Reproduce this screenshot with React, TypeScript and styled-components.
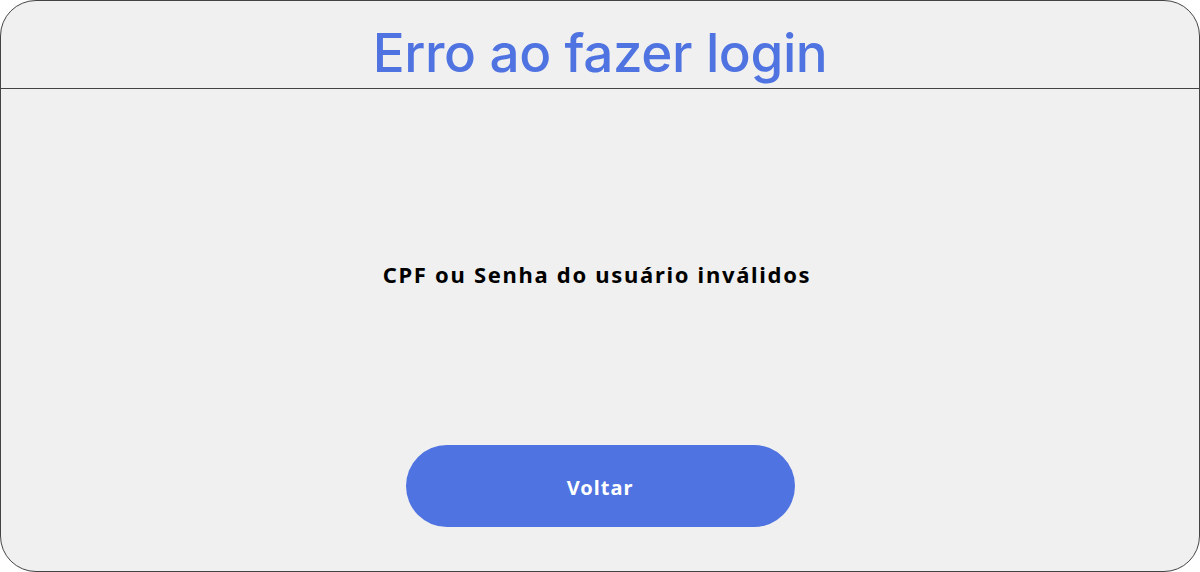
import * as React from 'react';
import styled, { createGlobalStyle } from 'styled-components';

const GlobalStyle = createGlobalStyle`
  html, body {
    margin: 0;
    padding: 0;
    background: #ffffff;
  }
  * {
    box-sizing: border-box;
  }
`;

const Card = styled.div`
  width: 1200px;
  height: 572px;
  display: flex;
  flex-direction: column;
  background: #f0f0f0;
  border: 1px solid #444;
  border-radius: 36px;
  overflow: hidden;
`;

const Header = styled.header`
  height: 88px;
  flex-shrink: 0;
  display: flex;
  align-items: center;
  justify-content: center;
  border-bottom: 1px solid #444;
`;

const Title = styled.h1`
  margin: 0;
  padding-top: 16px;
  font-family: 'Inter', 'Lato', sans-serif;
  font-weight: 500;
  font-size: 53px;
  letter-spacing: -0.4px;
  color: #4f73e0;
`;

const Body = styled.main`
  flex: 1;
  display: flex;
  flex-direction: column;
  align-items: center;
  padding-top: 170px;
`;

const Message = styled.p`
  margin: 0 0 0 -6px;
  font-family: 'Noto Sans', sans-serif;
  font-weight: 700;
  font-size: 22px;
  letter-spacing: 1.7px;
  color: #000;
`;

const BackButton = styled.button`
  margin-top: 156px;
  width: 389px;
  height: 82px;
  border: none;
  border-radius: 41px;
  background: #4f73e0;
  color: #fff;
  font-family: 'Noto Sans', sans-serif;
  font-weight: 700;
  font-size: 20px;
  letter-spacing: 1px;
  padding-top: 4px;
  cursor: pointer;
`;

export default function App() {
  return (
    <>
      <GlobalStyle />
      <Card>
        <Header>
          <Title>Erro ao fazer login</Title>
        </Header>
        <Body>
          <Message>CPF ou Senha do usuário inválidos</Message>
          <BackButton>Voltar</BackButton>
        </Body>
      </Card>
    </>
  );
}
